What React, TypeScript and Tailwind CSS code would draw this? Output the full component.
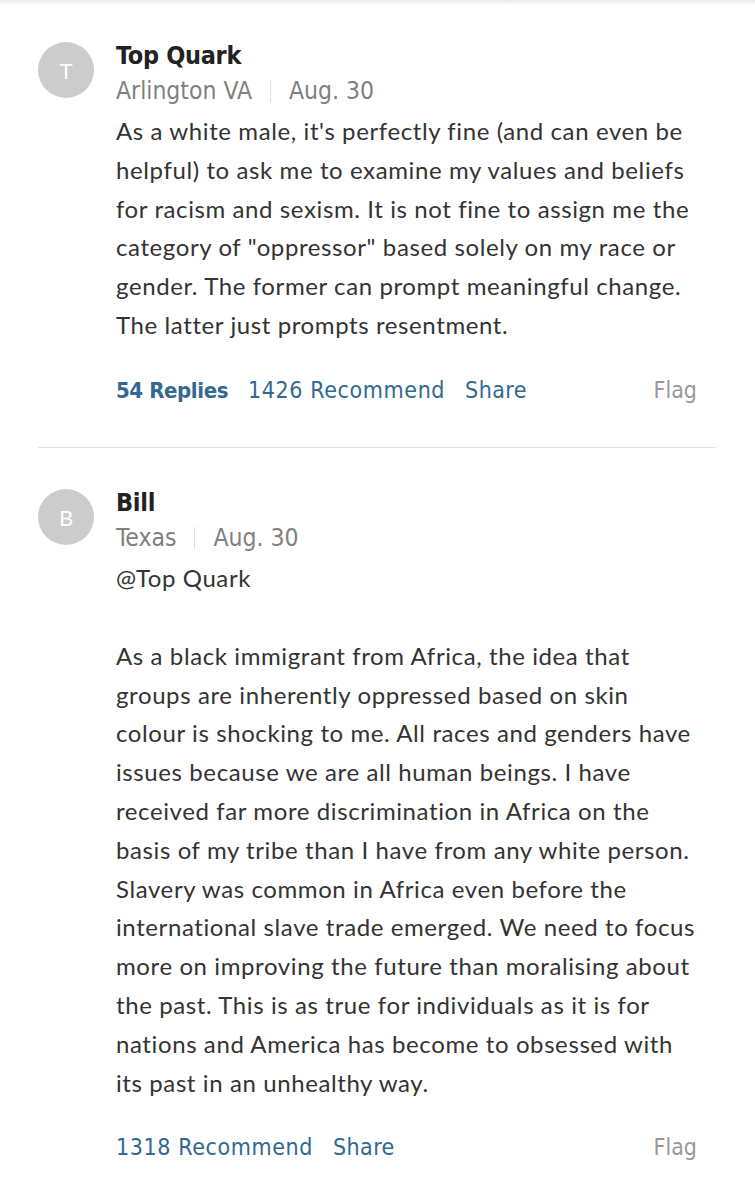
import React from "react";

const cond = { fontFamily: '"DejaVu Sans Condensed", "DejaVu Sans", sans-serif' };
const body = { fontFamily: 'Lato, "Liberation Sans", sans-serif' };

function Avatar({ letter }: { letter: string }) {
  return (
    <div className="w-[56px] h-[56px] rounded-full bg-[#cccccc] flex items-center justify-center text-white text-[22px] shrink-0" style={body}>
      {letter}
    </div>
  );
}

function Lines({ lines }: { lines: string[] }) {
  return (
    <div className="text-[24px] leading-[38.8px] tracking-[0.6px] text-[#333333]" style={body}>
      {lines.map((l, i) => (
        <div key={i} className="whitespace-nowrap">{l === "" ? "\u00a0" : l}</div>
      ))}
    </div>
  );
}

function Comment({
  letter, name, loc, date, lines, replies, rec,
}: {
  letter: string; name: string; loc: string; date: string; lines: string[]; replies?: string; rec: string;
}) {
  return (
    <div className="flex gap-[22px]">
      <div className="pt-[2px]"><Avatar letter={letter} /></div>
      <div className="flex-1">
        <div className="text-[25px] font-bold leading-[32px] tracking-[-0.3px] text-[#222222]" style={cond}>{name}</div>
        <div className="flex items-center text-[24.5px] font-light leading-[30px] text-[#808080] mt-[4px]" style={cond}>
          <span>{loc}</span>
          <span className="mx-[18px] w-px h-[22px] bg-[#dddddd]" />
          <span>{date}</span>
        </div>
        <div className="mt-[6px]"><Lines lines={lines} /></div>
        <div className="flex items-center mt-[28px] text-[23px] text-[#326891] pr-[19px]" style={cond}>
          {replies && <span className="font-bold mr-[20px] text-[22px] tracking-[-0.4px]">{replies}</span>}
          <span className="mr-[20px] tracking-[0.6px]">{rec}</span>
          <span className="tracking-[0.4px]">Share</span>
          <span className="ml-auto text-[#999999]">Flag</span>
        </div>
      </div>
    </div>
  );
}

export default function App() {
  return (
    <div className="w-[755px] h-[1200px] bg-white overflow-hidden relative">
      <div className="h-[6px] bg-gradient-to-b from-[#ececec] to-white" />
      <div className="pl-[38px] pr-[39px] pt-[34px]">
        <Comment
          letter="T"
          name="Top Quark"
          loc="Arlington VA"
          date="Aug. 30"
          replies="54 Replies"
          rec="1426 Recommend"
          lines={[
            "As a white male, it's perfectly fine (and can even be",
            "helpful) to ask me to examine my values and beliefs",
            "for racism and sexism. It is not fine to assign me the",
            'category of "oppressor" based solely on my race or',
            "gender. The former can prompt meaningful change.",
            "The latter just prompts resentment.",
          ]}
        />
        <div className="h-px bg-[#e2e2e2] mt-[40px] mb-[39px]" />
        <Comment
          letter="B"
          name="Bill"
          loc="Texas"
          date="Aug. 30"
          rec="1318 Recommend"
          lines={[
            "@Top Quark",
            "",
            "As a black immigrant from Africa, the idea that",
            "groups are inherently oppressed based on skin",
            "colour is shocking to me. All races and genders have",
            "issues because we are all human beings. I have",
            "received far more discrimination in Africa on the",
            "basis of my tribe than I have from any white person.",
            "Slavery was common in Africa even before the",
            "international slave trade emerged. We need to focus",
            "more on improving the future than moralising about",
            "the past. This is as true for individuals as it is for",
            "nations and America has become to obsessed with",
            "its past in an unhealthy way.",
          ]}
        />
      </div>
    </div>
  );
}
